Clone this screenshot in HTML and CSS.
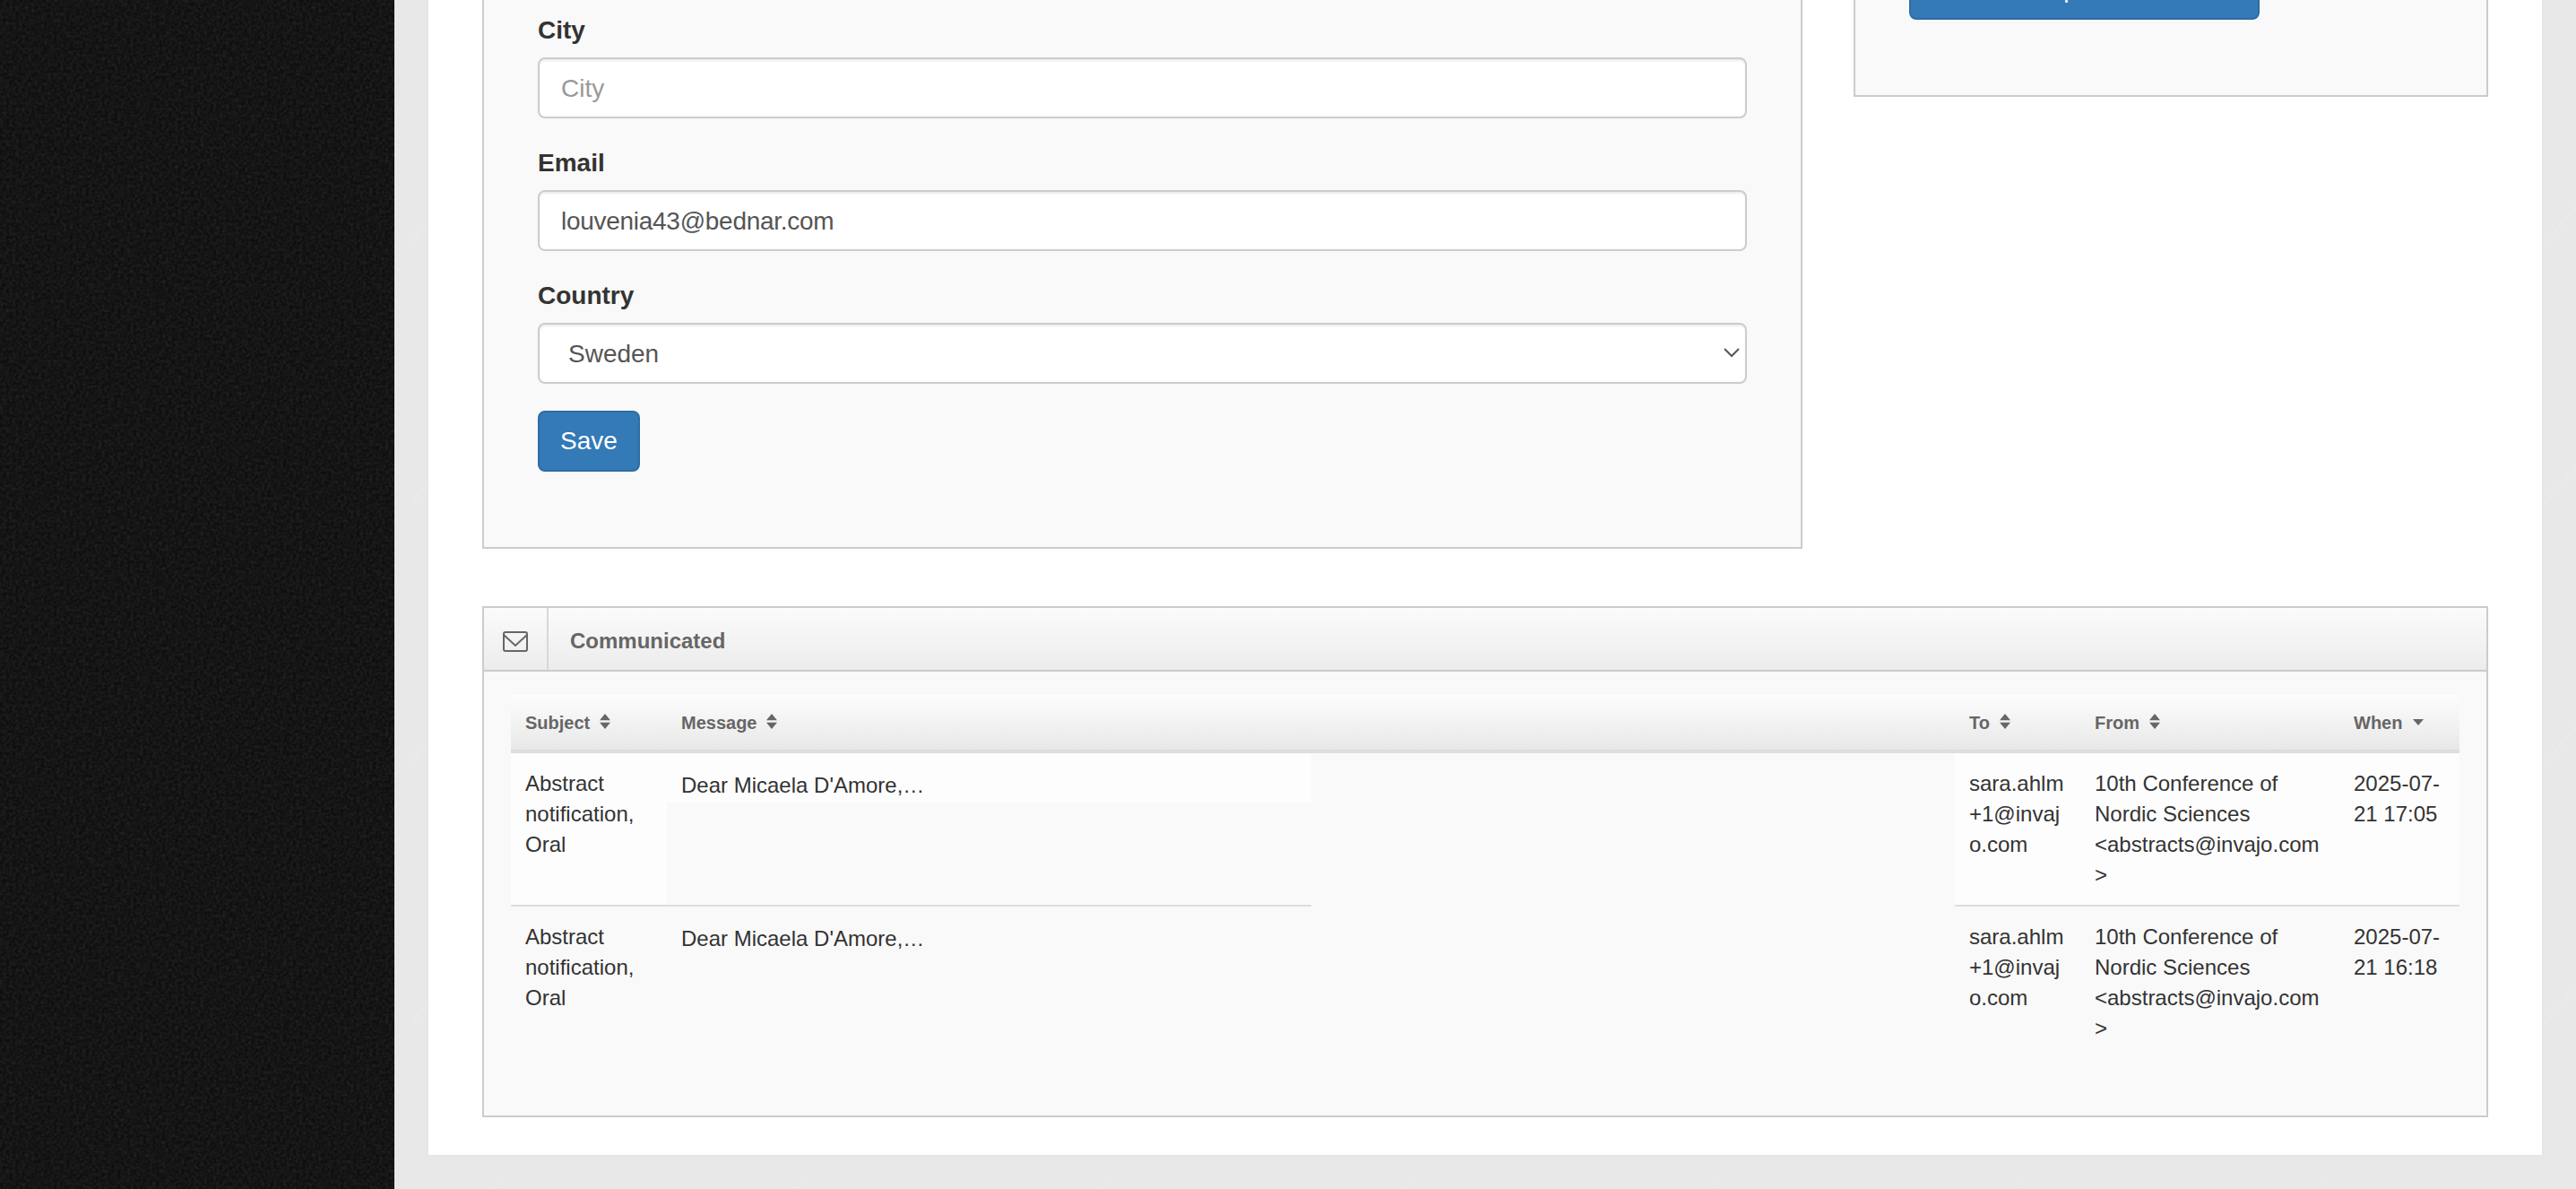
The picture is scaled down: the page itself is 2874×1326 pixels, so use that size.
FILE: index.html
```html
<!DOCTYPE html>
<html lang="en">
<head>
<meta charset="utf-8">
<title>Profile</title>
<link rel="stylesheet" href="styles.css">
</head>
<body>
<aside class="sidebar"></aside>
<main class="main">
  <div class="card">
    <div class="top-row">
      <section class="panel form-panel">
        <form>
          <div class="form-group">
            <label class="label" for="city">City</label>
            <input class="control" id="city" type="text" placeholder="City">
          </div>
          <div class="form-group">
            <label class="label" for="email">Email</label>
            <input class="control control-tight" id="email" type="text" value="louvenia43@bednar.com">
          </div>
          <div class="form-group">
            <label class="label" for="country">Country</label>
            <div class="select-wrap">
              <select class="control select" id="country"><option>Sweden</option></select>
              <svg class="chevron" viewBox="0 0 18 11" aria-hidden="true"><path d="M1 1l8 8 8-8"/></svg>
            </div>
          </div>
          <button class="btn" type="button">Save</button>
        </form>
      </section>
      <section class="panel side-panel">
        <button class="btn btn-wide" type="button">Send password</button>
      </section>
    </div>

    <section class="panel comm-panel">
      <header class="comm-head">
        <div class="comm-icon">
          <svg viewBox="0 0 28 23" aria-hidden="true"><rect x="1" y="1" width="26" height="21" rx="2"/><path d="M1 4l13 12L27 4"/></svg>
        </div>
        <h2 class="comm-title">Communicated</h2>
      </header>
      <div class="comm-body">
        <div class="grid-table">
          <div class="th">Subject <svg class="sort" viewBox="0 0 10 14" aria-hidden="true"><path d="M5 0l5 6H0zM5 14L0 8h10z"/></svg></div>
          <div class="th">Message <svg class="sort" viewBox="0 0 10 14" aria-hidden="true"><path d="M5 0l5 6H0zM5 14L0 8h10z"/></svg></div>
          <div class="th">To <svg class="sort" viewBox="0 0 10 14" aria-hidden="true"><path d="M5 0l5 6H0zM5 14L0 8h10z"/></svg></div>
          <div class="th">From <svg class="sort" viewBox="0 0 10 14" aria-hidden="true"><path d="M5 0l5 6H0zM5 14L0 8h10z"/></svg></div>
          <div class="th">When <svg class="sort sort-one" viewBox="0 0 12 7" aria-hidden="true"><path d="M6 7L0 0h12z"/></svg></div>

          <div class="td odd ruled">Abstract notification, Oral</div>
          <div class="msg"><div class="msg-box ruled"><div class="msg-text odd">Dear Micaela D'Amore,…</div></div></div>
          <div class="td odd ruled">sara.ahlm+1@invajo.com</div>
          <div class="td odd ruled">10th Conference of Nordic Sciences &lt;abstracts@invajo.com&gt;</div>
          <div class="td odd ruled">2025-07-21 17:05</div>

          <div class="td">Abstract notification, Oral</div>
          <div class="msg"><div class="msg-box"><div class="msg-text">Dear Micaela D'Amore,…</div></div></div>
          <div class="td">sara.ahlm+1@invajo.com</div>
          <div class="td">10th Conference of Nordic Sciences &lt;abstracts@invajo.com&gt;</div>
          <div class="td">2025-07-21 16:18</div>
        </div>
      </div>
    </section>
  </div>
</main>
</body>
</html>
```
FILE: styles.css
```css
* { box-sizing: border-box; }

html, body { height: 100%; }

body {
  margin: 0;
  display: flex;
  overflow: hidden;
  font-family: "Liberation Sans", Arial, sans-serif;
  font-size: 28px;
  line-height: 40px;
  color: #333;
  background-color: #e8e8e8;
  background-image:
    url("data:image/svg+xml,%3Csvg xmlns='http://www.w3.org/2000/svg' width='340' height='290'%3E%3Cg stroke='%23ececec' stroke-width='1.2' fill='none' stroke-linecap='round'%3E%3Cpath d='M14 96L96 8M120 270l96-112M250 90l60-70M40 250l34-40M170 110l26-30M300 260l30-36'/%3E%3C/g%3E%3C/svg%3E");
}

.sidebar {
  flex: 0 0 440px;
  background-color: #0f0f0f;
  background-image: url("data:image/svg+xml,%3Csvg xmlns='http://www.w3.org/2000/svg' width='320' height='320'%3E%3Cfilter id='n'%3E%3CfeTurbulence type='fractalNoise' baseFrequency='.28' numOctaves='3' stitchTiles='stitch'/%3E%3CfeColorMatrix values='0 0 0 0 1 0 0 0 0 1 0 0 0 0 1 0 0 0 .14 -.045'/%3E%3C/filter%3E%3Crect width='320' height='320' filter='url(%23n)'/%3E%3C/svg%3E");
}

.main {
  flex: 1;
  padding: 0 38px;
  min-width: 0;
}

.card {
  margin-top: -90px;
  padding: 0 60px 42px;
  background: #fff;
  box-shadow: 0 0 3px rgba(0, 0, 0, .04);
}

.top-row {
  display: grid;
  grid-template-columns: 1473px 708px;
  justify-content: space-between;
  align-items: start;
}

.panel {
  border: 2px solid #ccc;
  background: #f9f9f9;
}

.form-panel { padding: 102px 60px 84px; }

.side-panel { padding: 42px 60px 84px; }

.form-group { margin-bottom: 30px; }

.label {
  display: block;
  margin-bottom: 10px;
  font-weight: 700;
}

.control {
  display: block;
  width: 100%;
  height: 68px;
  padding: 13px 24px 11px;
  border: 2px solid #ccc;
  border-radius: 8px;
  background: #fff;
  box-shadow: inset 0 2px 2px rgba(0, 0, 0, .075);
  color: #555;
  font: 28px/40px "Liberation Sans", Arial, sans-serif;
}

.control::placeholder { color: #999; opacity: 1; }

.control-tight { letter-spacing: -.28px; }

.select-wrap { position: relative; }

.select {
  appearance: none;
  padding-left: 32px;
}

.chevron {
  position: absolute;
  top: 28px;
  right: 8px;
  width: 18px;
  height: 11px;
  fill: none;
  stroke: #555;
  stroke-width: 2;
}

.btn {
  display: block;
  height: 68px;
  padding: 12px 23px;
  border: 2px solid #2e6da4;
  border-radius: 8px;
  background: #337ab7;
  color: #fff;
  font: 28px/40px "Liberation Sans", Arial, sans-serif;
}

.btn-wide { width: 391px; }

.comm-panel { margin-top: 64px; }

.comm-head {
  display: flex;
  height: 71px;
  border-bottom: 2px solid #ccc;
  background: linear-gradient(#fbfbfb, #ececec);
}

.comm-icon {
  display: flex;
  flex: 0 0 72px;
  align-items: center;
  justify-content: center;
  border-right: 2px solid #d8d8d8;
}

.comm-icon svg {
  width: 28px;
  height: 23px;
  margin-top: 5px;
  fill: none;
  stroke: #666;
  stroke-width: 2;
}

.comm-title {
  margin: 0 0 0 24px;
  color: #666;
  font-size: 24px;
  font-weight: 700;
  line-height: 73px;
}

.comm-body { padding: 26px 30px 64px; }

.grid-table {
  display: grid;
  grid-template-columns: 174px 1437px 140px 289px 134px;
  font-size: 24px;
  line-height: 34px;
}

.th {
  height: 65px;
  padding: 14px 16px 0;
  border-bottom: 4px solid #ddd;
  background: linear-gradient(#fdfdfd, #e8e8e8);
  color: #666;
  font-size: 20px;
  font-weight: 700;
  white-space: nowrap;
}

.sort {
  width: 12px;
  height: 17px;
  margin-left: 5px;
  fill: #666;
}

.sort-one {
  width: 12px;
  height: 7px;
  margin: 0 0 4px 6px;
}

.td {
  padding: 17px 16px 16px;
  overflow-wrap: anywhere;
}

.odd { background: #fdfdfd; }

.ruled { border-bottom: 2px solid #ddd; }

.msg { display: flex; }

.msg-box { width: 719px; }

.msg-text { padding: 19px 16px 2px; }
```
